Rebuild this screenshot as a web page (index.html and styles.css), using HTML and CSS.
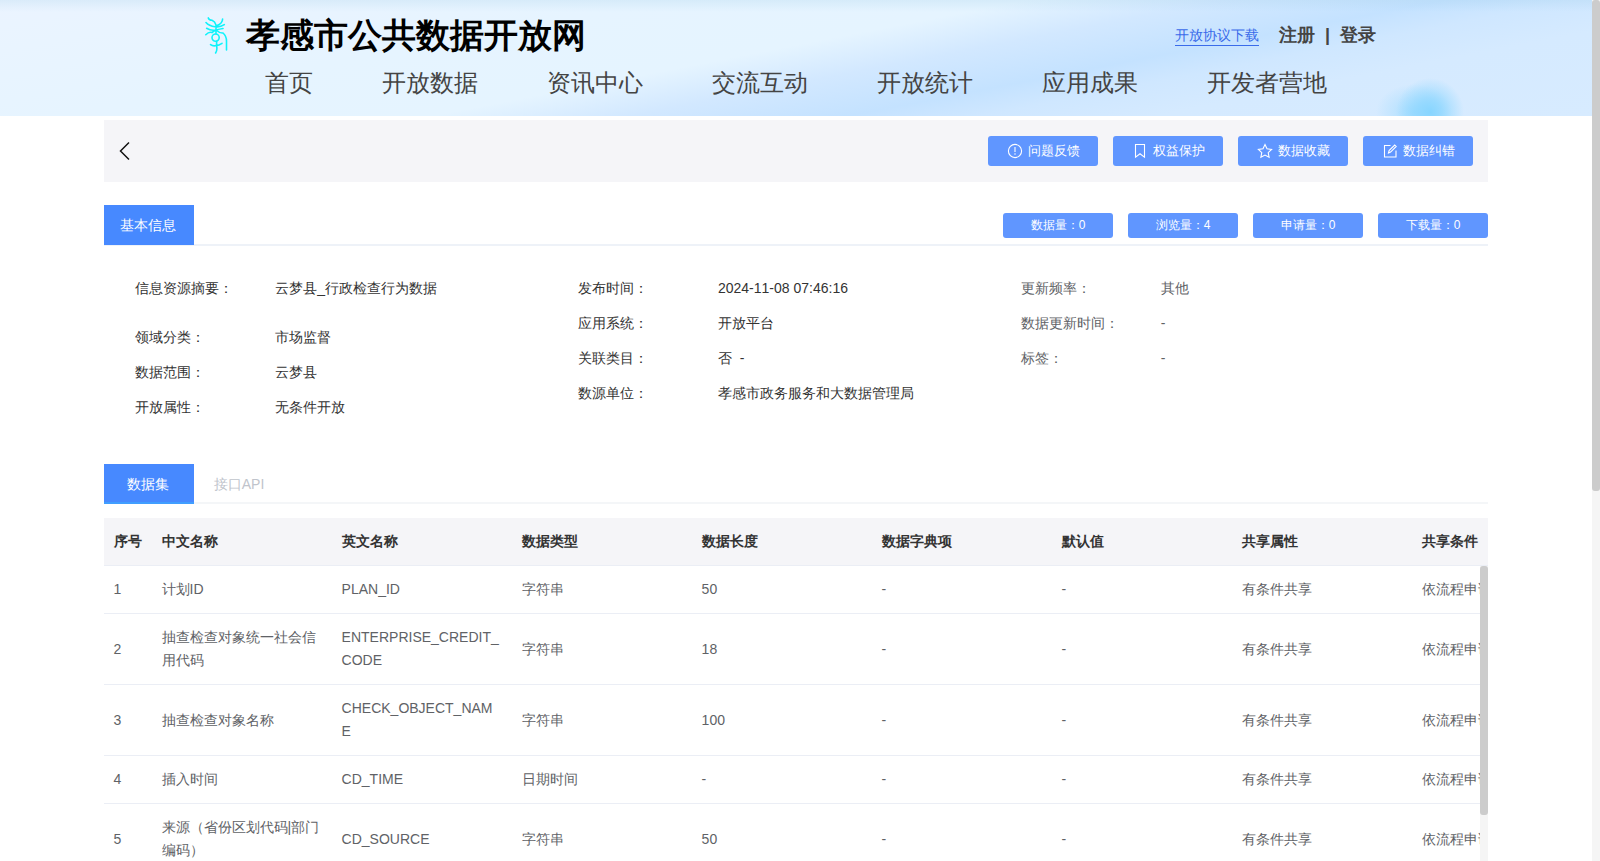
FILE: index.html
```html
<!DOCTYPE html>
<html>
<head>
<meta charset="utf-8">
<title>孝感市公共数据开放网</title>
<link rel="stylesheet" href="styles.css">
</head>
<body>
<div class="page">
<header class="site-header">
  <div class="brand-row">
    <svg class="logo" width="24" height="38" viewBox="0 0 24 38" fill="none" stroke="#0ef3fb" stroke-width="1.6" stroke-linecap="round"><path d="M3.300.9Q4 3 7 3.300Q10 4.500 11 8V17M17.600 2Q17.500 6.500 12 8.500M1 5.500Q4 9 10 9.700Q15 10.500 19.300 7.700M1.600 11.300Q6 14 11 13Q15 12 18 11.500M.8 17.700Q4 14.500 7 15.500Q9 14 11 13Q15 16.500 18 16Q21.500 19 21.500 24V33M5.600 27.600Q8 29.500 11 28.600Q14 28.500 17 26.300M11.600 24.300V29Q12.500 33 10.600 36"/><circle cx="10.600" cy="20.600" r="3.600"/></svg>
    <h1>孝感市公共数据开放网</h1>
    <a class="protocol">开放协议下载</a>
    <div class="account"><span>注册</span><span>|</span><span>登录</span></div>
  </div>
  <nav><a>首页</a><a>开放数据</a><a>资讯中心</a><a>交流互动</a><a>开放统计</a><a>应用成果</a><a>开发者营地</a></nav>
</header>
<main>
  <div class="toolbar">
    <svg class="back" width="12" height="20" viewBox="0 0 12 20" fill="none" stroke="#111" stroke-width="1.5"><path d="M10 1.500L1.500 10L10 18.500"/></svg>
    <div class="actions">
      <button><svg viewBox="0 0 16 16"><circle cx="8" cy="8" r="6.6"/><path d="M8 4v5M8 10.3v1.4"/></svg>问题反馈</button>
      <button><svg viewBox="0 0 16 16"><path d="M3.500 1.500h9v12.700L8 10.700l-4.500 3.500z"/></svg>权益保护</button>
      <button><svg viewBox="0 0 16 16"><path d="M8 1.600l2 4.200 4.600.6-3.400 3.200.9 4.600L8 12l-4.100 2.200.9-4.600L1.400 6.400 6 5.800z"/></svg>数据收藏</button>
      <button><svg viewBox="0 0 16 16"><path d="M8.500 2.500H2.500v11.500h11.500V7.500M6.500 10l.6-2.400 5.600-5.600 1.500 1.500-5.600 5.600z"/></svg>数据纠错</button>
    </div>
  </div>
  <div class="section-head basic"><span class="tab active">基本信息</span>
    <div class="stats"><span>数据量：0</span><span>浏览量：4</span><span>申请量：0</span><span>下载量：0</span></div>
  </div>
  <div class="info">
    <dl><div class="tall"><dt>信息资源摘要：</dt><dd>云梦县_行政检查行为数据</dd></div><div><dt>领域分类：</dt><dd>市场监督</dd></div><div><dt>数据范围：</dt><dd>云梦县</dd></div><div><dt>开放属性：</dt><dd>无条件开放</dd></div></dl>
    <dl><div><dt>发布时间：</dt><dd>2024-11-08 07:46:16</dd></div><div><dt>应用系统：</dt><dd>开放平台</dd></div><div><dt>关联类目：</dt><dd>否&nbsp; -</dd></div><div><dt>数源单位：</dt><dd>孝感市政务服务和大数据管理局</dd></div></dl>
    <dl class="light"><div><dt>更新频率：</dt><dd>其他</dd></div><div><dt>数据更新时间：</dt><dd>-</dd></div><div><dt>标签：</dt><dd>-</dd></div></dl>
  </div>
  <div class="section-head datasets"><span class="tab active">数据集</span><span class="tab">接口API</span></div>
  <div class="table-wrap">
    <div class="row head"><span>序号</span><span>中文名称</span><span>英文名称</span><span>数据类型</span><span>数据长度</span><span>数据字典项</span><span>默认值</span><span>共享属性</span><span>共享条件</span></div>
    <div class="table-body">
      <div class="rows">
        <div class="row"><span>1</span><span>计划ID</span><span>PLAN_ID</span><span>字符串</span><span>50</span><span>-</span><span>-</span><span>有条件共享</span><span>依流程申请</span></div>
        <div class="row"><span>2</span><span>抽查检查对象统一社会信用代码</span><span>ENTERPRISE_CREDIT_CODE</span><span>字符串</span><span>18</span><span>-</span><span>-</span><span>有条件共享</span><span>依流程申请</span></div>
        <div class="row"><span>3</span><span>抽查检查对象名称</span><span>CHECK_OBJECT_NAME</span><span>字符串</span><span>100</span><span>-</span><span>-</span><span>有条件共享</span><span>依流程申请</span></div>
        <div class="row"><span>4</span><span>插入时间</span><span>CD_TIME</span><span>日期时间</span><span>-</span><span>-</span><span>-</span><span>有条件共享</span><span>依流程申请</span></div>
        <div class="row"><span>5</span><span>来源（省份区划代码|部门编码）</span><span>CD_SOURCE</span><span>字符串</span><span>50</span><span>-</span><span>-</span><span>有条件共享</span><span>依流程申请</span></div>
      </div>
      <div class="track"><div class="thumb"></div></div>
    </div>
  </div>
</main>
</div>
<div class="track page-track"><div class="thumb"></div></div>
</body>
</html>
```
FILE: styles.css
```css
* { box-sizing: border-box; }
body { margin: 0; height: 861px; overflow: hidden; display: flex; background: #fff; color: #333; font: 14px/20px "Liberation Sans", sans-serif; }
.page { width: 1592px; height: 861px; overflow: hidden; }
.site-header {
  height: 116px;
  background:
    linear-gradient(180deg, rgba(150, 200, 225, .2), rgba(150, 200, 225, 0) 12px),
    radial-gradient(ellipse 34px 34px at 1430px 112px, rgba(130, 212, 255, .9) 0, rgba(135, 213, 255, .7) 35%, rgba(160, 215, 255, 0) 100%),
    radial-gradient(ellipse 38px 28px at 1414px 112px, rgba(140, 214, 255, .6), rgba(160, 215, 255, 0) 100%),
    linear-gradient(169deg, #ebf4ff 0, #e6f4ff 30%, #e5f4ff 47%, #d2e8ff 56%, #c4e2ff 66%, #cfe7ff 72%, #d5eaff 80%, #d7ebff 100%);
}
.brand-row { height: 70px; padding-left: 205px; display: flex; align-items: center; }
.logo { width: 24px; height: 38px; margin: 1px 17px 0 0; }
h1 { margin: 0; width: 340px; font-size: 34px; line-height: 40px; color: #000; white-space: nowrap; }
.protocol { margin: 1px 0 0 589px; height: 21px; line-height: 20px; border-bottom: 1px solid #3a6bea; color: #3a6bea; }
.account { margin-left: 20px; display: flex; gap: 10px; font-size: 18px; font-weight: bold; color: #444; }
nav { padding-left: 265px; display: flex; gap: 69px; font-size: 24px; line-height: 25px; color: #444; }
main { width: 1384px; margin: 4px 0 0 104px; }
.toolbar { height: 62px; padding: 0 15px; display: flex; align-items: center; justify-content: space-between; background: #f5f5f8; }
.actions { display: flex; gap: 15px; }
button { width: 110px; height: 30px; padding: 0; border: 0; border-radius: 3px; display: flex; align-items: center; justify-content: center; gap: 5px; background: #6096ff; color: #fff; font: 13px/20px "Liberation Sans", sans-serif; }
button svg { width: 16px; height: 16px; fill: none; stroke: #fff; stroke-width: 1.1; }
.section-head { display: flex; }
.basic { height: 41px; margin-top: 23px; border-bottom: 2px solid #eef2f8; justify-content: space-between; }
.tab { width: 90px; height: 40px; line-height: 40px; text-align: center; color: #c0c4cc; }
.active { padding-right: 2px; background: #4789ff; color: #fff; }
.stats { display: flex; gap: 15px; padding-top: 8px; }
.stats span { width: 110px; height: 25px; border-radius: 3px; background: #6096ff; color: #fff; font-size: 12px; line-height: 25px; text-align: center; }
.info { height: 218px; padding: 25px 24.7px 0 31.3px; display: grid; grid-template-columns: repeat(3, 1fr); font-kerning: none; }
dl { margin: 0; }
dl div { height: 35px; line-height: 35px; display: flex; }
dl .tall { height: 49px; }
dt { width: 140px; }
dd { margin: 0; }
.light { color: #606266; }
.datasets { height: 40px; border-bottom: 2px solid #f4f6f8; }
.datasets .active { border-bottom: 2px solid #409eff; }
.table-wrap { margin-top: 14px; height: 343px; overflow: hidden; }
.row { width: 1488px; display: grid; grid-template-columns: 47.6px repeat(8, 180px); align-items: center; border-bottom: 1px solid #ebeef5; color: #606266; }
.row span { padding: 12px 10px; line-height: 23px; overflow-wrap: anywhere; }
.head { background: #f5f5f8; color: #333; font-weight: bold; }
.row span:first-child { padding: 12px 9px 12px 9.6px; }
.table-body { display: flex; height: 295px; }
.rows { width: 1376px; overflow: hidden; }
.track { width: 8px; background: #f5f5f5; }
.thumb { height: 249px; border-radius: 3px; background: #ccc; }
.page-track .thumb { height: 491px; }
```
